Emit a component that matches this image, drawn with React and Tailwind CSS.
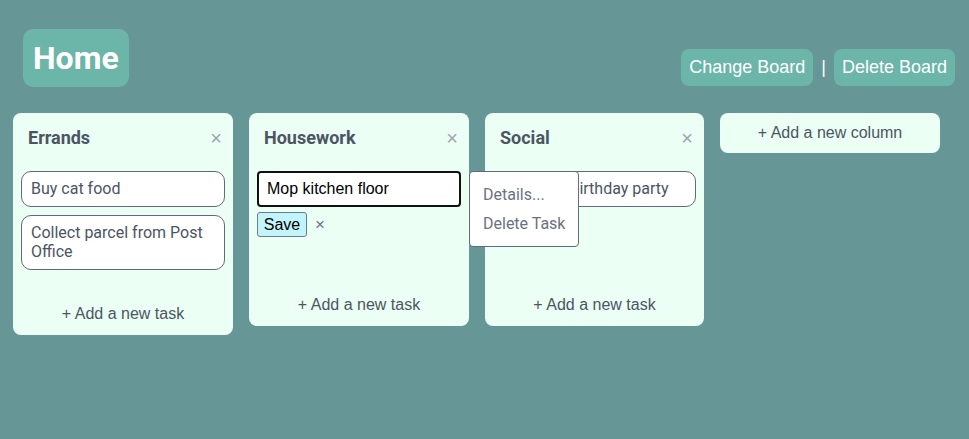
import { useState } from "react"

const ROBOTO = "font-['Roboto',sans-serif]"
const ARIAL = "font-['Liberation_Sans',Arial,sans-serif]"

const COLUMNS = [
  { id: 1, title: "Errands", tasks: ["Buy cat food", "Collect parcel from Post Office"], width: "w-[220px]" },
  { id: 2, title: "Housework", tasks: [], editing: "Mop kitchen floor", width: "w-[220px]" },
  { id: 3, title: "Social", tasks: ["Organise birthday party"], menu: true, width: "w-[219px]" },
]

function TaskCard({ text }) {
  return (
    <div className={`rounded-[10px] border border-[#5f6b78] bg-white px-[9px] py-2 text-[16px] leading-[1.15] text-[#4b5563] ${ROBOTO}`}>
      {text}
    </div>
  )
}

function TaskMenu() {
  return (
    <div className={`absolute -left-[24px] top-0 z-10 w-[110px] rounded-[4px] border border-[#5f6b78] bg-white py-2 ${ROBOTO}`}>
      <div className="h-[29px] whitespace-nowrap px-[13px] text-[16px] leading-[29px] text-[#6b7280]">Details...</div>
      <div className="h-[29px] whitespace-nowrap px-[13px] text-[16px] leading-[29px] text-[#6b7280]">Delete Task</div>
    </div>
  )
}

function Column({ col }) {
  const [draft, setDraft] = useState(col.editing || "")

  return (
    <div className={`${col.width} shrink-0 rounded-lg bg-[#ebfff5] px-2 pt-[15px] pb-px`}>
      <div className="flex h-5 items-center justify-between pl-[7px] pr-[3px]">
        <h2 className={`text-[18px] font-bold leading-5 text-[#4b5563] ${ROBOTO}`}>{col.title}</h2>
        <button className={`text-[20px] leading-5 text-[#9ca3af] ${ARIAL}`}>×</button>
      </div>

      <div className="mt-[23px] flex min-h-[90px] flex-col gap-2">
        {col.tasks.map((t, i) => (
          <div key={i} className="relative">
            <TaskCard text={t} />
            {col.menu && i === 0 && <TaskMenu />}
          </div>
        ))}

        {col.editing !== undefined && (
          <div className="flex flex-col">
            <input
              value={draft}
              onChange={e => setDraft(e.target.value)}
              className={`h-9 w-full rounded-[4px] border-2 border-[#111] bg-white px-2 text-[16px] text-black outline-none ${ARIAL}`}
            />
            <div className="mt-[5px] flex items-center gap-[8px]">
              <button className={`h-[25px] w-[50px] rounded-[3px] border border-[#6b7b88] bg-[#c2f5fb] text-[16px] leading-none text-black ${ARIAL}`}>
                Save
              </button>
              <button className={`text-[17px] leading-none text-[#6b7280] ${ARIAL}`}>×</button>
            </div>
          </div>
        )}
      </div>

      <button className={`mt-6 block w-full py-[10px] text-center text-[16px] leading-5 text-[#4b5563] ${ARIAL}`}>
        + Add a new task
      </button>
    </div>
  )
}

export default function App() {
  return (
    <div className="min-h-screen bg-[#669696]">
      <div className="flex items-end justify-between pt-[29px] pl-[23px] pr-[14px]">
        <div className="flex h-[58px] items-center rounded-[10px] bg-[#6cb5a9] px-[10px]">
          <h1 className={`text-[32px] font-bold leading-none text-white ${ROBOTO}`}>Home</h1>
        </div>
        <div className={`mb-px flex items-center gap-[8px] ${ARIAL}`}>
          <button className="h-[37px] rounded-[8px] bg-[#6cb5a9] px-[8px] text-[18px] text-white">Change Board</button>
          <span className="text-[18px] text-white">|</span>
          <button className="h-[37px] rounded-[8px] bg-[#6cb5a9] px-[8px] text-[18px] text-white">Delete Board</button>
        </div>
      </div>

      <div className="mt-[26px] flex items-start gap-4 px-[13px]">
        {COLUMNS.map(c => <Column key={c.id} col={c} />)}
        <button className={`h-10 w-[220px] shrink-0 rounded-lg bg-[#ebfff5] text-[16px] text-[#4b5563] ${ARIAL}`}>
          + Add a new column
        </button>
      </div>
    </div>
  )
}
